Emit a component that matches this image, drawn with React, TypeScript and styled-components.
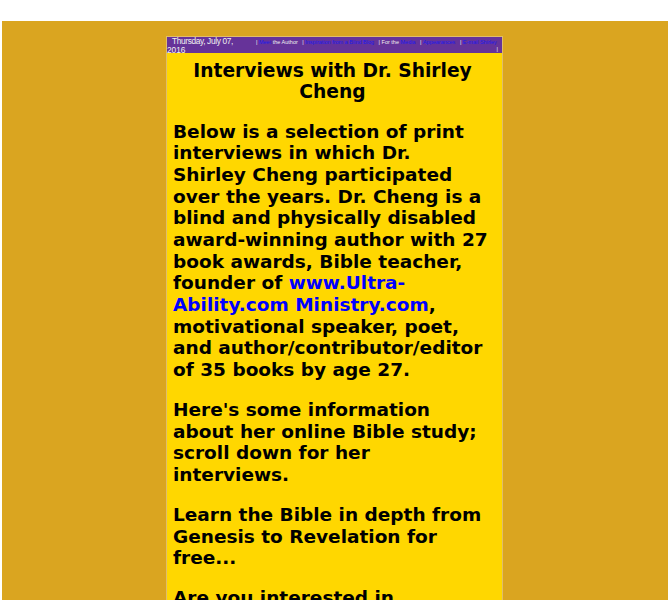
import styled, { createGlobalStyle } from 'styled-components';

const GlobalStyle = createGlobalStyle`
  html, body {
    margin: 0;
    padding: 0;
    background: #fff;
    height: 600px;
    overflow: hidden;
  }
`;

const Page = styled.div`
  margin: 21px 2px 0;
  background: #daa520;
  padding-top: 15px;
  height: 579px;
  overflow: hidden;
`;

const Column = styled.div`
  width: 335px;
  margin-left: 164px;
  border: 1px solid #e0bd6a;
  background: #ffd700;
  font-family: "DejaVu Sans", sans-serif;
`;

const TopBar = styled.div`
  display: flex;
  background: #663399;
  color: #f0f0f0;
  height: 16px;
  overflow: hidden;
`;

const DateCell = styled.div`
  flex: 0 0 89px;
  font-family: "Liberation Sans", Arial, sans-serif;
  font-size: 8.3px;
  line-height: 8.5px;
`;

const DateFirst = styled.span`
  display: block;
  padding-left: 5px;
  letter-spacing: -0.35px;
`;

const NavCell = styled.div`
  flex: 1;
  min-width: 0;
  padding-top: 2px;
  font-family: "Liberation Sans", Arial, sans-serif;
  font-size: 5.5px;
  line-height: 7px;
  text-align: right;
`;

const NavRow = styled.div`
  display: flex;
  gap: 4.5px;
  white-space: nowrap;
`;

const NavEnd = styled.div`
  padding-right: 4px;
`;

const NavLink = styled.a`
  color: #1a1aee;
  text-decoration: none;
`;

const Body = styled.div`
  padding: 6px 13px 0 6px;
  color: #000;
  font-size: 18.5px;
  line-height: 21.64px;
  font-weight: bold;
`;

const Heading = styled.div`
  margin: 1px -3px 18.78px 0;
  font-size: 18.67px;
  line-height: 21px;
  text-align: center;
`;

const Paragraph = styled.p`
  margin: 0 0 18.5px;
`;

const InlineLink = styled.a`
  color: #0000ff;
  text-decoration: none;
`;

export default function App() {
  return (
    <>
      <GlobalStyle />
      <Page>
        <Column>
          <TopBar>
            <DateCell>
              <DateFirst>Thursday, July 07,</DateFirst>
              2016
            </DateCell>
            <NavCell>
              <NavRow>
                <span>|&nbsp;<NavLink href="#">Meet</NavLink> the Author</span>
                <span>|&nbsp;<NavLink href="#">Inspiration from a Blind Blog</NavLink></span>
                <span>|&nbsp;For the <NavLink href="#">Media</NavLink></span>
                <span>|&nbsp;<NavLink href="#">Appearances</NavLink></span>
                <span>|&nbsp;<NavLink href="#">E-mail Shirley</NavLink></span>
              </NavRow>
              <NavEnd>|</NavEnd>
            </NavCell>
          </TopBar>
          <Body>
            <Heading>Interviews with Dr. Shirley Cheng</Heading>
            <Paragraph>
              Below is a selection of print interviews in which Dr. Shirley Cheng participated over the years. Dr. Cheng is a blind and physically disabled award-winning author with 27 book awards, Bible teacher, founder of{' '}
              <InlineLink href="#">www.Ultra-Ability.com Ministry.com</InlineLink>, motivational speaker, poet, and author/contributor/editor of 35 books by age 27.
            </Paragraph>
            <Paragraph>Here's some information about her online Bible study; scroll down for her interviews.</Paragraph>
            <Paragraph>Learn the Bible in depth from Genesis to Revelation for free...</Paragraph>
            <Paragraph>Are you interested in</Paragraph>
          </Body>
        </Column>
      </Page>
    </>
  );
}
